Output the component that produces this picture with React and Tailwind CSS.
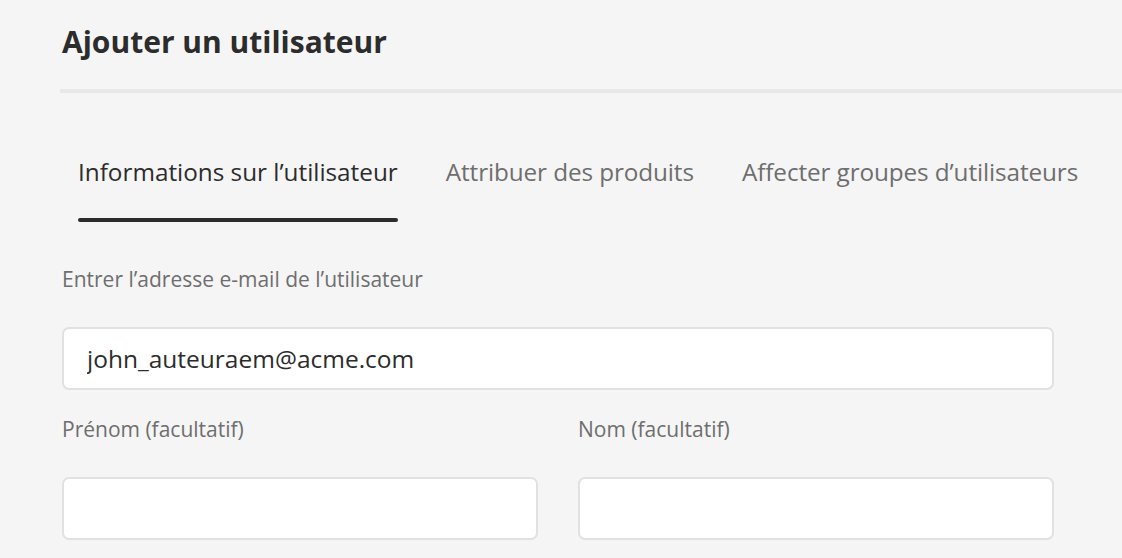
import React, { useState } from "react";

const tabs = [
    "Informations sur l\u2019utilisateur",
    "Attribuer des produits",
    "Affecter groupes d\u2019utilisateurs",
];

export default function App() {
    const [active, setActive] = useState(0);
    const [email, setEmail] = useState("john_auteuraem@acme.com");
    const [first, setFirst] = useState("");
    const [last, setLast] = useState("");

    return (
        <div className="min-h-screen bg-[#f5f5f5] text-[#2c2c2c] font-['Open_Sans',sans-serif] overflow-hidden">
            <div className="pl-[60px]">
                <h1 className="pl-[2px] pt-[22px] h-[89px] text-[30px] font-bold leading-[40px] whitespace-nowrap">
                    Ajouter un utilisateur
                </h1>
                <div className="h-[4px] bg-[#e8e8e8]" />
            </div>

            <div className="pl-[62px] w-[1054px]">
                <div className="flex gap-[48px] pl-[16px] pt-[62px]">
                    {tabs.map((t, i) => (
                        <button
                            key={t}
                            onClick={() => setActive(i)}
                            className={`relative shrink-0 whitespace-nowrap pb-[33px] text-[24.3px] leading-[34px] ${
                                i === active ? "text-[#2c2c2c]" : "text-[#6e6e6e] tracking-[-0.1px]"
                            }`}
                        >
                            {t}
                            {i === active && (
                                <span className="absolute left-0 right-0 bottom-0 h-[4px] rounded-full bg-[#2c2c2c]" />
                            )}
                        </button>
                    ))}
                </div>

                <label className="block mt-[43px] text-[21px] leading-[28px] text-[#6e6e6e] whitespace-nowrap">
                    Entrer l’adresse e-mail de l’utilisateur
                </label>
                <input
                    className="mt-[34px] w-full h-[63px] px-[23px] bg-white border-2 border-[#e1e1e1] rounded-[7px] text-[24.5px] text-[#2c2c2c] outline-none"
                    value={email}
                    onChange={(e) => setEmail(e.target.value)}
                />

                <div className="grid grid-cols-2 gap-[40px] mt-[25px]">
                    <div>
                        <label className="block text-[21px] leading-[28px] text-[#6e6e6e] whitespace-nowrap">
                            Prénom (facultatif)
                        </label>
                        <input
                            className="mt-[34px] w-full h-[63px] px-[23px] bg-white border-2 border-[#e1e1e1] rounded-[7px] text-[24.5px] outline-none"
                            value={first}
                            onChange={(e) => setFirst(e.target.value)}
                        />
                    </div>
                    <div>
                        <label className="block text-[21px] leading-[28px] text-[#6e6e6e] whitespace-nowrap">
                            Nom (facultatif)
                        </label>
                        <input
                            className="mt-[34px] w-full h-[63px] px-[23px] bg-white border-2 border-[#e1e1e1] rounded-[7px] text-[24.5px] outline-none"
                            value={last}
                            onChange={(e) => setLast(e.target.value)}
                        />
                    </div>
                </div>
            </div>
        </div>
    );
}
